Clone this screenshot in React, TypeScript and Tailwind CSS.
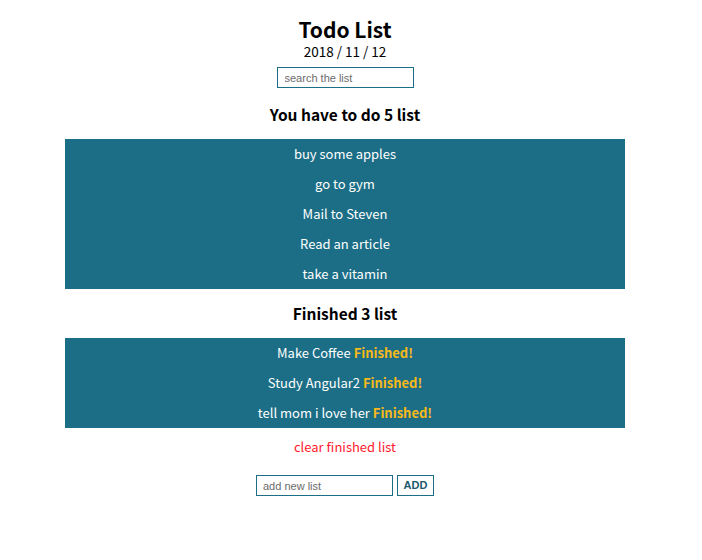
import { useState } from 'react';

const todos = ['buy some apples', 'go to gym', 'Mail to Steven', 'Read an article', 'take a vitamin'];
const finished = ['Make Coffee', 'Study Angular2', 'tell mom i love her'];

const App: React.FC = () => {
  const [search, setSearch] = useState('');
  const [newItem, setNewItem] = useState('');

  return (
    <div className="min-h-[560px] w-full bg-white text-black font-['Noto_Sans_CJK_KR','Noto_Sans',sans-serif]">
      <div className="flex w-[690px] flex-col items-center pt-[15px]">
        <h1 className="text-[21px] font-bold leading-[28px]">Todo List</h1>
        <p className="text-[13.5px] leading-[16px]">2018 / 11 / 12</p>
        <input
          value={search}
          onChange={e => setSearch(e.target.value)}
          placeholder="search the list"
          className="mt-[8px] h-[21px] w-[137px] border border-[#1c6e86] px-[7px] text-[11px] font-['Liberation_Sans',Arial,sans-serif] placeholder:text-[#6b6b6b] outline-none"
        />
        <h2 className="mt-[14px] text-[15.5px] font-bold leading-[24px]">You have to do {todos.length} list</h2>
        <ul className="mt-[13px] w-[560px] bg-[#1c6e86] text-white">
          {todos.map(t => (
            <li key={t} className="h-[30px] text-center text-[13px] leading-[30px]">{t}</li>
          ))}
        </ul>
        <h2 className="mt-[12px] text-[15.5px] font-bold leading-[24px]">Finished {finished.length} list</h2>
        <ul className="mt-[13px] w-[560px] bg-[#1c6e86] text-white">
          {finished.map(t => (
            <li key={t} className="h-[30px] text-center text-[13px] leading-[30px]">
              {t} <span className="font-bold text-[#f6b91a]">Finished!</span>
            </li>
          ))}
        </ul>
        <button className="mt-[9px] text-[13px] leading-[20px] text-[#ff1a2e]">clear finished list</button>
        <div className="mt-[18px] flex gap-[4px]">
          <input
            value={newItem}
            onChange={e => setNewItem(e.target.value)}
            placeholder="add new list"
            className="h-[21px] w-[137px] border border-[#1c6e86] px-[6px] text-[11px] font-['Liberation_Sans',Arial,sans-serif] placeholder:text-[#6b6b6b] outline-none"
          />
          <button className="h-[21px] w-[37px] border border-[#1c6e86] text-[11px] font-bold text-[#1c5a6e] font-['Liberation_Sans',Arial,sans-serif]">
            ADD
          </button>
        </div>
      </div>
    </div>
  );
};

export default App;
